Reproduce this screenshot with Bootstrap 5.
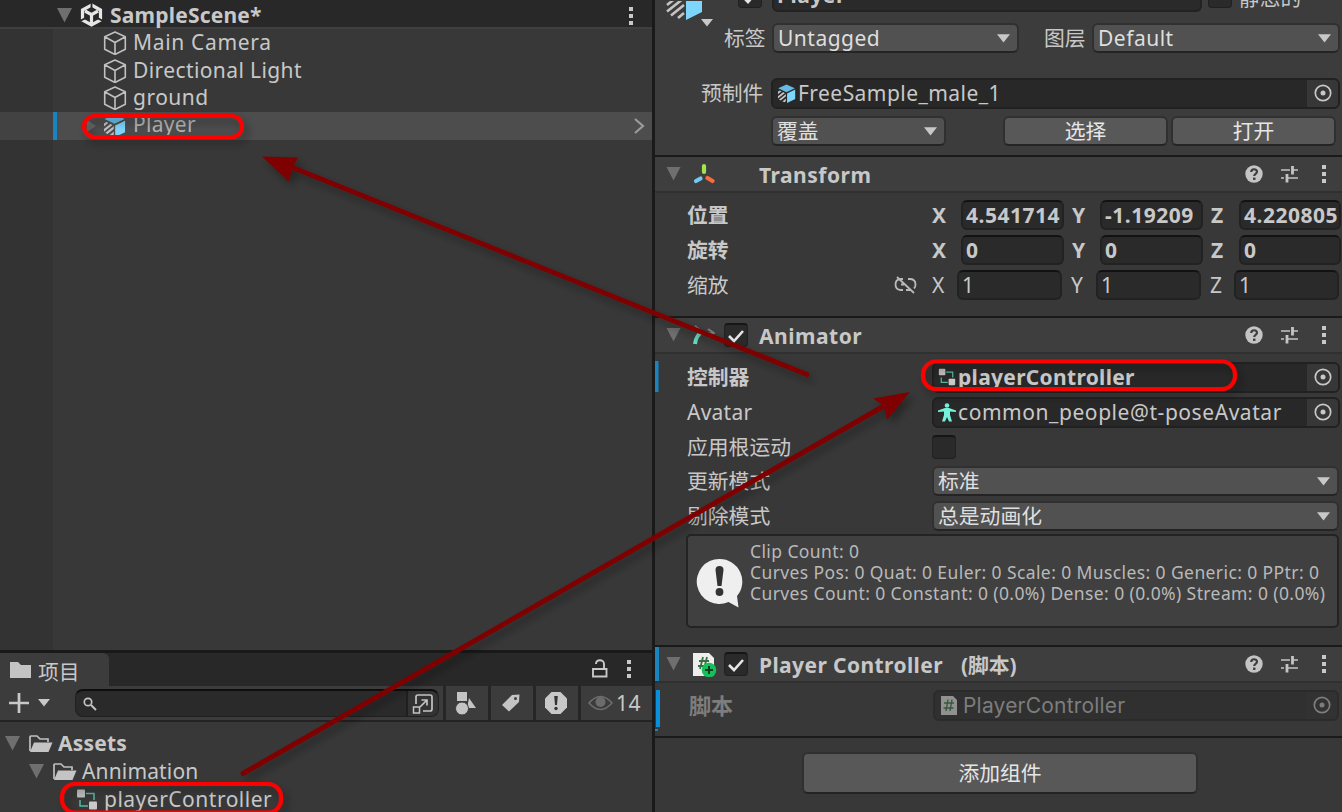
<!DOCTYPE html>
<html lang="zh-CN">
<head>
<meta charset="utf-8">
<title>SampleScene</title>
<link href="https://cdn.jsdelivr.net/npm/bootstrap@5.3.0/dist/css/bootstrap.min.css" rel="stylesheet">
<style>
body{width:1342px;height:812px;overflow:hidden;background:#383838;color:#c8c8c8;font:400 21px/28px "Noto Sans","Noto Sans CJK SC",sans-serif;letter-spacing:.5px;white-space:nowrap}
svg{display:block;flex:none}
.zh{letter-spacing:0;font-size:20.8px}
.en{letter-spacing:.5px;font-size:21px}
.editor{width:1342px;height:812px;position:relative;overflow:hidden}
.side{width:652px;height:812px}
.split{width:3px;background:#1a1a1a}
.inspector{width:687px;height:812px}
.scene-bar{height:29px;background:#282828;border-bottom:2px solid #3f3f3f;padding-left:57px;padding-right:18px}
.scene-tree{height:621px;background:linear-gradient(90deg,#333 53px,#383838 53px)}
.obj{height:27.7px;padding-left:103px;gap:6px}
.obj span{margin-top:-2px}
.obj.sel{background:linear-gradient(90deg,#424242 53px,#1a84bf 53px,#1a84bf 56.5px,#4d4d4d 56.5px);padding-left:87px;padding-right:7px}
.obj.sel span{margin-top:-4px;color:#b4b4b4}
.tabs{height:36px;border-top:3px solid #191919;background:#282828;padding-right:20px}
.tab-on{width:109px;background:#3c3c3c;border-radius:0 6px 0 0;padding-left:10px;gap:7px}
.tools{height:36px;background:#3c3c3c;border-bottom:2px solid #232323;padding-left:8px}
.find{width:365px;height:28px;margin-left:25px;border:1px solid #202020;border-top:2px solid #0e0e0e;border-radius:8px;background:#2a2a2a;padding-left:7px}
.find i{width:32px;height:25px;border-left:2px solid #1f1f1f;background:#333;border-radius:0 7px 7px 0}
.tool{width:45px;height:34px;border-left:3px solid #262626;padding-right:3px}
.eye{width:74px;padding-left:7px;gap:3px}
.files{height:90px;padding-top:8px}
.files>div{height:27.7px;gap:5px}
.files span,.files b{margin-top:-1px}
.topbox{height:155px;background:#3c3c3c;padding-left:8px}
.fld,.pop,.pb{height:31px;border:2px solid #222;border-radius:6px;background:#2a2a2a;display:flex;align-items:center;overflow:hidden;flex:none}
.fld{border-top-color:#121212;padding-left:3px}
.fld.num{height:30px}
.fld.ref{border-color:#212121;background:#282828;padding-left:4px}
.pick{width:31px;height:27px;margin-left:auto;background:#373737;display:grid;place-items:center}
.pop{height:30px;background:#515151;border-color:#303030;border-bottom-color:#242424;padding:0 7px 0 4px;justify-content:space-between;color:#dfdfdf}
.pb{height:30px;background:#585858;border-color:#303030;border-bottom-color:#242424;justify-content:center;color:#e6e6e6}
.chk{width:24px;height:24px;border:1px solid #202020;border-top:2px solid #151515;border-radius:4px;background:#2a2a2a;display:grid;place-items:center;flex:none}
.comp{height:38px;border-top:2px solid #1a1a1a;border-bottom:2px solid #303030;background:#3e3e3e;padding:0 15px 0 11px}
.comp b{padding-top:1px}
.ico{width:60px;margin-left:12px}
.acts{margin-left:auto;gap:17px}
.prow{height:34.7px;padding-left:32px}
.lb{width:245px;flex:none}
.ax{width:28px;flex:none}
.note{width:653px;height:94px;margin-left:31px;border:2px solid #232323;border-radius:5px;background:#404040;color:#b9b9b9;font-size:17.5px;line-height:20.8px;letter-spacing:.4px;padding:5px 0 0 9px;gap:7px}
.dim{color:#7d7d7d}
.inter{font-family:Inter,"Noto Sans",sans-serif;letter-spacing:.2px}
.over{position:absolute;left:0;top:0;pointer-events:none}
</style>
</head>
<body>
<svg width="0" height="0" class="position-absolute"><defs>
<symbol id="tri" viewBox="0 0 14 14"><path d="M0 0H14L7 13.5Z" fill="#6f6f6f"/></symbol>
<symbol id="dn" viewBox="0 0 12 8"><path d="M0 0H12L6 7.6Z" fill="#c8c8c8"/></symbol>
<symbol id="dots" viewBox="0 0 6 20"><path d="M1 1h4v4H1zM1 8h4v4H1zM1 15h4v4H1z" fill="#c8c8c8"/></symbol>
<symbol id="cube" viewBox="0 0 24 24"><path d="M12 1 22.3 5.700V18.300L12 23.500 1.700 18.300V5.700ZM1.700 5.700 12 11.500 22.300 5.700M12 11.500V23" fill="none" stroke="#c0c0c0" stroke-width="1.600" stroke-linejoin="round"/></symbol>
<clipPath id="face"><path d="M1 7 11.200 12V24L1 19Z"/></clipPath>
<symbol id="prefab" viewBox="0 0 24 24"><path d="M1.500 5.300 12 .5 22.500 5.300 12 10.300Z" fill="#67bae2"/><path d="M12.700 12 23 7V19L12.700 24Z" fill="#7fd6fd"/><path d="M-2 14 9 5M-2 19.500 13 7.500M-1 24 14 12M5 25 14 17.800" stroke="#c4c4c4" stroke-width="2.300" clip-path="url(#face)"/></symbol>
<symbol id="pickdot" viewBox="0 0 18 18"><circle cx="9" cy="9" r="7.700" fill="none" stroke="currentColor" stroke-width="1.700"/><circle cx="9" cy="9" r="2.500" fill="currentColor"/></symbol>
<symbol id="tick" viewBox="0 0 16 14"><path d="M1 7 6 12 15 2" fill="none" stroke="#e6e6e6" stroke-width="2.600"/></symbol>
<symbol id="help" viewBox="0 0 18 18"><circle cx="9" cy="9" r="8.700" fill="#c4c4c4"/><path d="M6.200 7C6.200 3.300 12 3.400 12 6.800 12 9 9.200 8.800 9.200 11" fill="none" stroke="#3e3e3e" stroke-width="2.200"/><rect x="8" y="12.600" width="2.500" height="2.300" fill="#3e3e3e"/></symbol>
<symbol id="preset" viewBox="0 0 18 18"><path d="M1 5H10M13 5H18M1 13H4M8 13H18" stroke="#c4c4c4" stroke-width="1.700"/><path d="M12.500 1V9.500M7 9V17.500" stroke="#c4c4c4" stroke-width="2.800"/></symbol>
<symbol id="folder" viewBox="0 0 24 18"><path d="M1 16V2Q1 1 2 1H8L11 4H19V7" fill="none" stroke="#c0c0c0" stroke-width="1.700"/><path d="M1 17 5 7.500H23.500L19.500 17Z" fill="#c4c4c4"/></symbol>
<symbol id="ctrl" viewBox="0 0 22 21"><path d="M10 4.500H18V11M4 11V17H12" fill="none" stroke="#54b8a2" stroke-width="1.500"/><rect x="1" y="0.500" width="8" height="8" rx="1" fill="#bdbdbd"/><rect x="13" y="12.500" width="8" height="8" rx="1" fill="#c9c9c9"/></symbol>
</defs></svg>
<div class="editor d-flex">
<div class="side d-flex flex-column">
 <div class="scene-bar d-flex align-items-center"><svg width="15" height="15" class="mt-1"><use href="#tri"/></svg>
  <svg style="margin:2px 0 0 8px" width="23" height="24" viewBox="0 0 23 24"><path d="M11.500 2 20.500 7V17L11.500 22 2.500 17V7Z" fill="none" stroke="#e6e6e6" stroke-width="3.200"/><path d="M5 8 11.500 11.700 18 8M11.500 11.700V20" fill="none" stroke="#e6e6e6" stroke-width="3.200"/><path d="M11.500 0V6M0 18 5 15.400M23 18 18 15.400" stroke="#282828" stroke-width="1.800"/></svg>
  <b style="margin-left:7px;letter-spacing:.2px;padding-top:2px">SampleScene*</b><svg class="ms-auto mt-1" width="6" height="20"><use href="#dots"/></svg></div>
 <div class="scene-tree">
  <div class="obj d-flex align-items-center"><svg width="24" height="24"><use href="#cube"/></svg><span style="letter-spacing:.68px">Main Camera</span></div>
  <div class="obj d-flex align-items-center"><svg width="24" height="24"><use href="#cube"/></svg><span style="letter-spacing:.4px">Directional Light</span></div>
  <div class="obj d-flex align-items-center"><svg width="24" height="24"><use href="#cube"/></svg><span>ground</span></div>
  <div class="obj sel d-flex align-items-center"><svg width="9" height="12" viewBox="0 0 9 12"><path d="M0 0 9 6 0 12Z" fill="#6a6a6a"/></svg><svg width="25" height="23"><use href="#prefab"/></svg><span style="letter-spacing:.3px">Player</span><svg class="ms-auto" width="12" height="16" viewBox="0 0 12 16"><path d="M2 1 10 8 2 15" fill="none" stroke="#9b9b9b" stroke-width="2.200"/></svg></div>
 </div>
 <div class="tabs d-flex"><div class="tab-on zh d-flex align-items-center"><svg width="21" height="18" viewBox="0 0 21 18"><path d="M0 1H8L11 4H21V17H0Z" fill="#c4c4c4"/></svg><span class="pt-1">项目</span></div>
  <div class="ms-auto d-flex align-items-center" style="gap:18px;padding-bottom:2px"><svg width="16" height="19" viewBox="0 0 16 19"><path d="M1 10H14.500V17.500H1ZM4 5C4 0 12 0 12 5V10" fill="none" stroke="#c8c8c8" stroke-width="1.900"/></svg><svg width="6" height="20"><use href="#dots"/></svg></div></div>
 <div class="tools d-flex align-items-center"><svg width="22" height="22" viewBox="0 0 22 22"><path d="M11 1V21M1 11H21" stroke="#c8c8c8" stroke-width="2.700"/></svg><svg class="ms-2" width="12" height="8"><use href="#dn"/></svg>
  <div class="find d-flex align-items-center"><svg width="14" height="14" viewBox="0 0 14 14"><circle cx="5" cy="5" r="3.700" fill="none" stroke="#c4c4c4" stroke-width="1.700"/><path d="M8 8 13 13" stroke="#c4c4c4" stroke-width="2"/></svg>
   <i class="ms-auto d-flex align-items-center justify-content-center"><svg width="22" height="22" viewBox="0 0 22 22"><path d="M4 11V4Q4 2 6 2H18Q20 2 20 4V16Q20 18 18 18H11M8 14 15 7M9.500 7H15V12.500" fill="none" stroke="#c4c4c4" stroke-width="1.700"/><rect x="1.500" y="14" width="6" height="6" fill="none" stroke="#c4c4c4" stroke-width="1.500"/></svg></i></div>
  <div class="tool d-flex align-items-center justify-content-center ms-1"><svg width="22" height="24" viewBox="0 0 22 24"><path d="M2 1H12V10H2ZM14 7 21 17H12Z" fill="#c4c4c4"/><circle cx="7" cy="17.500" r="6.500" fill="#c4c4c4" stroke="#3c3c3c"/></svg></div>
  <div class="tool d-flex align-items-center justify-content-center"><svg width="20" height="20" viewBox="0 0 20 20"><path d="M1 12 11 2 18.500 1.500 18 9 8 18.500Z" fill="#c4c4c4"/><circle cx="14.500" cy="5.500" r="1.500" fill="#3c3c3c"/></svg></div>
  <div class="tool d-flex align-items-center justify-content-center"><svg width="24" height="24" viewBox="0 0 24 24"><path d="M7.500 1H16.500L23 7.500V16.500L16.500 23H7.500L1 16.500V7.500Z" fill="#c8c8c8"/><path d="M10.200 5H13.800L13 14H11Z" fill="#333"/><circle cx="12" cy="17.500" r="1.700" fill="#333"/></svg></div>
  <div class="tool eye d-flex align-items-center"><svg width="25" height="16" viewBox="0 0 25 16"><path d="M1 8Q12.500-5 24 8 12.500 21 1 8Z" fill="none" stroke="#6c6c6c" stroke-width="1.600"/><circle cx="12.500" cy="7" r="5" fill="#6c6c6c"/></svg><span>14</span></div>
 </div>
 <div class="files">
  <div class="d-flex align-items-center" style="padding-left:5px"><svg width="15" height="15"><use href="#tri"/></svg><svg class="ms-1" width="24" height="18"><use href="#folder"/></svg><b style="letter-spacing:.2px">Assets</b></div>
  <div class="d-flex align-items-center" style="padding-left:29px"><svg width="15" height="15"><use href="#tri"/></svg><svg class="ms-1" width="24" height="18"><use href="#folder"/></svg><span style="letter-spacing:.15px">Annimation</span></div>
  <div class="d-flex align-items-center" style="padding-left:76px;gap:6px"><svg width="22" height="21"><use href="#ctrl"/></svg><span>playerController</span></div>
 </div>
</div>
<div class="split"></div>
<div class="inspector">
 <div class="topbox">
  <div class="d-flex align-items-end" style="height:12px">
   <svg width="50" height="27" viewBox="0 0 50 27" style="margin-bottom:-16px"><path d="M4 4 14-4M4 10.500 21-3M8 14.500 21 4M15 17 21 12" stroke="#c4c4c4" stroke-width="2.600"/><path d="M23-4V19L39 11V-4Z" fill="#7fd6fd"/><path d="M38 18H50L44 25.500Z" fill="#c8c8c8"/></svg>
   <div class="chk" style="margin:0 0 4px 25px"><svg width="16" height="14"><use href="#tick"/></svg></div>
   <div class="fld" style="width:430px;margin-left:10px"><b style="padding-bottom:3px">Player</b></div>
   <div class="chk" style="margin:0 0 4px 6px"></div><span class="zh" style="margin:0 0 0 7px">静态的</span>
  </div>
  <div class="d-flex align-items-center zh" style="height:52px"><span style="width:41px;margin-left:61px">标签</span><div class="pop en" style="width:247px;margin-left:7px">Untagged<svg width="13" height="9"><use href="#dn"/></svg></div><span style="width:42px;margin-left:25px">图层</span><div class="pop en" style="width:248px;margin-left:6px">Default<svg width="13" height="9"><use href="#dn"/></svg></div></div>
  <div class="d-flex align-items-center" style="height:58px"><span class="zh" style="width:63px;margin-left:38px">预制件</span><div class="fld ref" style="width:569px;margin-left:7px"><svg width="19" height="19"><use href="#prefab"/></svg><span style="margin-left:2px;letter-spacing:.45px">FreeSample_male_1</span><div class="pick"><svg width="18" height="18"><use href="#pickdot"/></svg></div></div></div>
  <div class="d-flex zh" style="margin-top:-6px"><div class="pop" style="width:175px;height:30px;margin-left:108px">覆盖<svg width="13" height="9"><use href="#dn"/></svg></div><div class="pb" style="width:165px;margin-left:57px">选择</div><div class="pb" style="width:165px;margin-left:3px">打开</div></div>
 </div>
 <div class="comp d-flex align-items-center"><svg width="15" height="14"><use href="#tri"/></svg><div class="ico"><svg width="22" height="22" viewBox="0 0 22 22"><g stroke-linecap="round" stroke-width="4.200"><path d="M11 3V9" stroke="#a3e34f"/><path d="M3 18 7.500 15.500" stroke="#73c8f5"/><path d="M14.500 15 19.500 18" stroke="#f86c3e"/></g></svg></div><b style="margin-left:6px">Transform</b><div class="acts d-flex align-items-center"><svg width="18" height="18"><use href="#help"/></svg><svg width="18" height="18"><use href="#preset"/></svg><svg style="margin-left:6px" width="6" height="20"><use href="#dots"/></svg></div></div>
 <div style="height:123px;padding-top:5px">
  <div class="prow d-flex align-items-center fw-bold"><span class="lb zh">位置</span><span class="ax">X</span><div class="fld num" style="width:103px;margin-left:1px">4.541714</div><span class="ax" style="margin-left:8px">Y</span><div class="fld num" style="width:103px">-1.19209</div><span class="ax" style="margin-left:8px">Z</span><div class="fld num" style="width:102px">4.220805</div></div>
  <div class="prow d-flex align-items-center fw-bold"><span class="lb zh">旋转</span><span class="ax">X</span><div class="fld num" style="width:103px;margin-left:1px">0</div><span class="ax" style="margin-left:8px">Y</span><div class="fld num" style="width:103px">0</div><span class="ax" style="margin-left:8px">Z</span><div class="fld num" style="width:102px">0</div></div>
  <div class="prow d-flex align-items-center"><span class="lb zh d-flex align-items-center">缩放<svg class="ms-auto" style="margin-right:15px" width="23" height="18" viewBox="0 0 23 18"><path d="M9 3H6.500Q1.500 3.500 1.500 8.500T6.500 14H9M12 14H16.500M14 3H16.500Q21.500 3.500 21.500 8.500 21.500 11 20 12.500M7 8.500H10M3 1 20 17" fill="none" stroke="#bababa" stroke-width="1.800"/></svg></span><span style="width:25px">X</span><div class="fld num" style="width:105px">1</div><span style="width:25px;margin-left:9px">Y</span><div class="fld num" style="width:105px">1</div><span style="width:24px;margin-left:9px">Z</span><div class="fld num" style="width:105px">1</div></div>
 </div>
 <div class="comp d-flex align-items-center"><svg width="15" height="14"><use href="#tri"/></svg><div class="ico d-flex align-items-center"><svg width="22" height="22" viewBox="0 0 22 22"><path d="M2 2C6 5 8 10 20 9M15 5 21 9 15 13" fill="none" stroke="#7c7c7c" stroke-width="2"/><path d="M2 20C3 13 5 10 9 8" fill="none" stroke="#68dcc0" stroke-width="4"/></svg><div class="chk" style="margin-left:9px"><svg width="16" height="14"><use href="#tick"/></svg></div></div><b style="margin-left:6px">Animator</b><div class="acts d-flex align-items-center"><svg width="18" height="18"><use href="#help"/></svg><svg width="18" height="18"><use href="#preset"/></svg><svg style="margin-left:6px" width="6" height="20"><use href="#dots"/></svg></div></div>
 <div style="height:291px;padding-top:6px">
  <div class="prow d-flex align-items-center fw-bold" style="background:linear-gradient(#1a84bf,#1a84bf) 0 1px/3.500px 31px no-repeat"><span class="lb zh">控制器</span><div class="fld ref" style="width:408px"><svg width="18" height="18"><use href="#ctrl"/></svg><span style="margin-left:2px;letter-spacing:.3px">playerController</span><div class="pick"><svg width="18" height="18"><use href="#pickdot"/></svg></div></div></div>
  <div class="prow d-flex align-items-center"><span class="lb" style="letter-spacing:.25px">Avatar</span><div class="fld ref" style="width:408px"><svg width="18" height="19" viewBox="0 0 18 19"><circle cx="9" cy="2.500" r="2.300" fill="#76f0da"/><path d="M0 7.500 7 5H11L18 7.500V9L12 8.500V12L14 18.500H11L9 14 7 18.500H4L6 12V8.500L0 9Z" fill="#76f0da"/></svg><span style="margin-left:2px;letter-spacing:.56px">common_people@t-poseAvatar</span><div class="pick"><svg width="18" height="18"><use href="#pickdot"/></svg></div></div></div>
  <div class="prow d-flex align-items-center"><span class="lb zh">应用根运动</span><div class="chk"></div></div>
  <div class="prow d-flex align-items-center zh"><span class="lb">更新模式</span><div class="pop" style="width:407px">标准<svg width="13" height="9"><use href="#dn"/></svg></div></div>
  <div class="prow d-flex align-items-center zh"><span class="lb">剔除模式</span><div class="pop" style="width:407px">总是动画化<svg width="13" height="9"><use href="#dn"/></svg></div></div>
  <div class="note d-flex" style="margin-top:1px"><svg style="margin:17px 0 0 -1px" width="47" height="50" viewBox="0 0 46 50"><path d="M23 1A22.500 22.500 0 1 0 32 44L42 49.500 40.500 38A22.500 22.500 0 0 0 23 1Z" fill="#efefef"/><path d="M19 12Q19 8 23 8T27 12L25 28H21Z" fill="#333"/><circle cx="23" cy="34" r="3.900" fill="#333"/></svg><div>Clip Count: 0<br>Curves Pos: 0 Quat: 0 Euler: 0 Scale: 0 Muscles: 0 Generic: 0 PPtr: 0<br>Curves Count: 0 Constant: 0 (0.0%) Dense: 0 (0.0%) Stream: 0 (0.0%)</div></div>
 </div>
 <div class="comp d-flex align-items-center" style="box-shadow:inset 4px 0 #1a84bf"><svg width="15" height="14"><use href="#tri"/></svg><div class="ico d-flex align-items-center"><svg width="24" height="25" viewBox="0 0 24 25"><path d="M0 1H16L21 6V24H0Z" fill="#eee"/><path d="M6 9H16M5 14H14M10 5 7 17M14 5 11 17" stroke="#38703f" stroke-width="1.800"/><circle cx="16" cy="18" r="7.300" fill="#14bf5c"/><path d="M16 14V22M12 18H20" stroke="#123b22" stroke-width="2"/></svg><div class="chk" style="margin-left:7px"><svg width="16" height="14"><use href="#tick"/></svg></div></div><b style="margin-left:6px;letter-spacing:.4px">Player Controller</b><b class="zh" style="margin-left:18px">(脚本)</b><div class="acts d-flex align-items-center"><svg width="18" height="18"><use href="#help"/></svg><svg width="18" height="18"><use href="#preset"/></svg><svg style="margin-left:6px" width="6" height="20"><use href="#dots"/></svg></div></div>
 <div class="dim" style="height:53px;padding-top:5px;background:linear-gradient(#0a8fdc,#0a8fdc) 1px 7px/4px 37px no-repeat,linear-gradient(#1a84bf,#1a84bf) 0 46px/3px 2px no-repeat"><div class="prow d-flex align-items-center" style="padding-left:34px"><b class="zh" style="width:244px;font-size:22px">脚本</b><div class="fld ref" style="width:406px;background:#303030;border-color:#2b2b2b"><svg style="margin-left:2px" width="16" height="19" viewBox="0 0 16 19"><path d="M0 0H12L16 4V19H0Z" fill="#919191"/><path d="M3 7H13M2.500 12H12.500M7 3.500 5 15M11 3.500 9 15" stroke="#38583c" stroke-width="1.400"/></svg><span class="inter" style="margin:2px 0 0 6px">PlayerController</span><div class="pick" style="background:#323232"><svg width="18" height="18"><use href="#pickdot"/></svg></div></div></div></div>
 <div class="d-flex justify-content-center" style="height:77px;border-top:2px solid #1a1a1a;padding:14px 4px 0 0"><div class="pb zh" style="width:396px;height:42px;margin-left:7px">添加组件</div></div>
</div>
<svg class="over" width="1342" height="812" viewBox="0 0 1342 812">
 <defs><filter id="sh" x="-10%" y="-10%" width="120%" height="130%"><feDropShadow dx="4" dy="5" stdDeviation="4" flood-color="#000" flood-opacity=".35"/></filter></defs>
 <g filter="url(#sh)" fill="#7f0000" stroke="none">
  <path d="M807 374.500 290 166.500" stroke="#7f0000" stroke-width="5" stroke-linecap="round"/><path d="M262 156.500 298.500 157.500 292 168 289 182Z"/>
  <path d="M243 773.500 884 406" stroke="#7f0000" stroke-width="5" stroke-linecap="round"/><path d="M910 392 873 398.500 884 406 887 420Z"/>
 </g>
 <g filter="url(#sh)" fill="none" stroke="#fd0000" stroke-width="4.200">
  <rect x="84" y="116" width="158" height="21" rx="10.500"/><rect x="923" y="361.500" width="312" height="27.500" rx="13"/><rect x="62" y="784" width="219" height="28.500" rx="13"/>
 </g>
</svg>
</div>
</body>
</html>
